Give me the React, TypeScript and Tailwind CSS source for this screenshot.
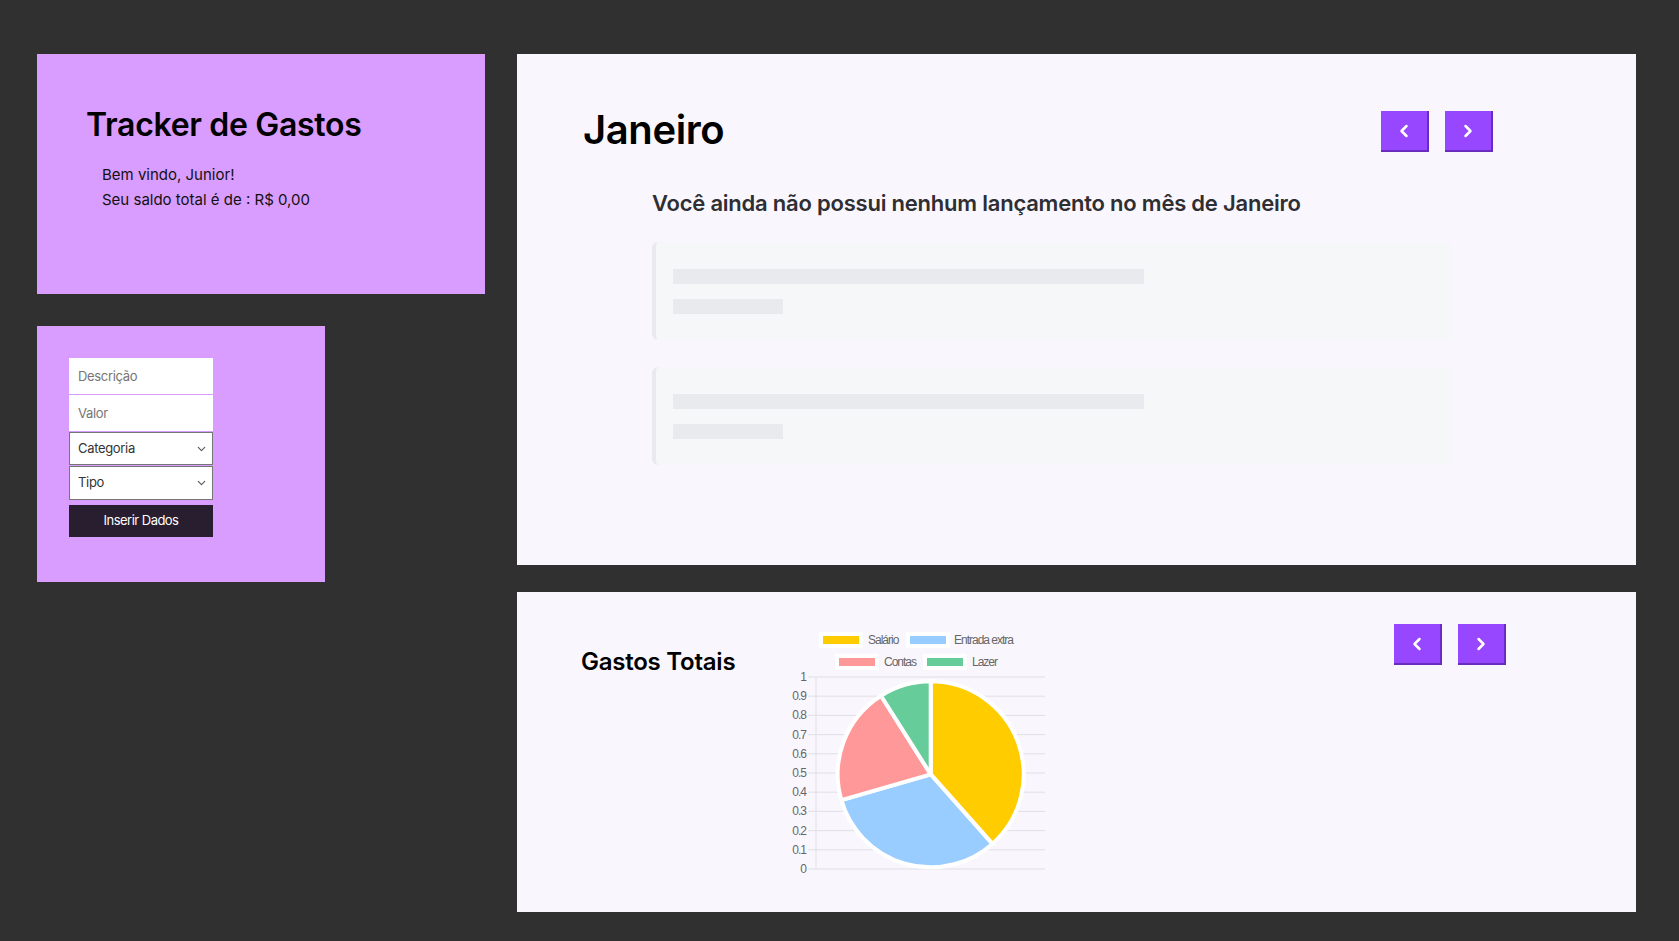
import React from "react";
import { ChevronLeft, ChevronRight, ChevronDown } from "lucide-react";

const slices = [
  { label: "Salário", color: "#ffcc00", value: 3000 },
  { label: "Entrada extra", color: "#99ccff", value: 2500 },
  { label: "Contas", color: "#ff9999", value: 1600 },
  { label: "Lazer", color: "#66cc99", value: 700 },
];

function NavButtons() {
  return (
    <div className="flex gap-4">
      <button className="flex h-[41px] w-[48px] items-center justify-center border-r-2 border-b-2 border-[#6a2cbc] bg-[#9747ff] text-white">
        <ChevronLeft size={20} strokeWidth={3} />
      </button>
      <button className="flex h-[41px] w-[48px] items-center justify-center border-r-2 border-b-2 border-[#6a2cbc] bg-[#9747ff] text-white">
        <ChevronRight size={20} strokeWidth={3} />
      </button>
    </div>
  );
}

function Select({ label, h }: { label: string; h: string }) {
  return (
    <div className={`relative mt-px w-full ${h}`}>
      <select className="h-full w-full appearance-none border border-[#767676] bg-white px-[8px] text-[#333]">
        <option>{label}</option>
      </select>
      <ChevronDown size={13} strokeWidth={2} className="pointer-events-none absolute top-1/2 right-[5px] -translate-y-1/2 text-[#555]" />
    </div>
  );
}

function Skeleton() {
  return (
    <div className="flex h-[98px] w-[800px] flex-col gap-[15px] rounded-l-md border-l-4 border-[#e9eaee] bg-[#f6f7f9] pt-[27px] pl-[17px]">
      <div className="h-[15px] w-[471px] bg-[#e8eaed]" />
      <div className="h-[15px] w-[110px] bg-[#e8eaed]" />
    </div>
  );
}

function PieChart() {
  const cx = 150.7;
  const cy = 149.3;
  const r = 93;
  const total = slices.reduce((s, x) => s + x.value, 0);
  let start = 0;
  const pt = (a: number) => [cx + r * Math.sin(a), cy - r * Math.cos(a)];
  const ticks = Array.from({ length: 11 }, (_, i) => i);

  return (
    <svg width={270} height={250} className="shrink-0" style={{ fontFamily: "'Liberation Sans', Arial, sans-serif" }}>
      {/* legend */}
      <g fontSize={12} fill="#666" letterSpacing={-1}>
        <rect x={41} y={9} width={40} height={12} fill="#ffcc00" stroke="#fff" strokeWidth={4} />
        <text x={88} y={19}>Salário</text>
        <rect x={128} y={9} width={40} height={12} fill="#99ccff" stroke="#fff" strokeWidth={4} />
        <text x={174} y={19}>Entrada extra</text>
        <rect x={57} y={31} width={40} height={12} fill="#ff9999" stroke="#fff" strokeWidth={4} />
        <text x={104} y={41}>Contas</text>
        <rect x={145} y={31} width={40} height={12} fill="#66cc99" stroke="#fff" strokeWidth={4} />
        <text x={192} y={41}>Lazer</text>
      </g>

      {/* grid */}
      {ticks.map((i) => {
        const y = 52 + i * 19.2;
        const v = (10 - i) / 10;
        return (
          <g key={i}>
            <line x1={28} x2={265} y1={y} y2={y} stroke="#e1dfe6" strokeWidth={1} />
            <text x={26} y={y + 4} fontSize={12} fill="#666" textAnchor="end" letterSpacing={-1}>
              {v === 0 ? "0" : v === 1 ? "1" : v.toFixed(1)}
            </text>
          </g>
        );
      })}
      <line x1={36} x2={36} y1={52} y2={244} stroke="#e1dfe6" strokeWidth={1} />

      {/* slices */}
      {slices.map((s) => {
        const a0 = start;
        const a1 = start + (s.value / total) * Math.PI * 2;
        start = a1;
        const [x0, y0] = pt(a0);
        const [x1, y1] = pt(a1);
        const large = a1 - a0 > Math.PI ? 1 : 0;
        return (
          <path
            key={s.label}
            d={`M${cx} ${cy} L${x0} ${y0} A${r} ${r} 0 ${large} 1 ${x1} ${y1} Z`}
            fill={s.color}
            stroke="#fff"
            strokeWidth={4}
            strokeLinejoin="round"
          />
        );
      })}
    </svg>
  );
}

export default function App() {
  return (
    <div className="flex min-h-screen items-start gap-8 bg-[#303030] pt-[54px] pl-[37px] font-[Inter,sans-serif]">
      <div className="flex w-[448px] flex-col gap-8">
        <div className="h-[240px] w-[448px] bg-[#d99cff] pt-[55px] pl-[49px]">
          <h1 className="text-[32px] leading-[32px] font-semibold tracking-[-0.01em] text-black">Tracker de Gastos</h1>
          <div className="mt-[21px] ml-4 text-[15px] leading-[25px] text-[#111]">
            <p>Bem vindo, Junior!</p>
            <p>Seu saldo total é de : R$ 0,00</p>
          </div>
        </div>

        <div className="h-[256px] w-[288px] bg-[#d99cff] pt-8 pl-8">
          <div className="flex w-[144px] flex-col text-[13px] tracking-tight">
            <input className="h-[36px] w-full bg-white px-[9px] placeholder:text-[#757575]" placeholder="Descrição" />
            <input className="mt-px h-[36px] w-full bg-white px-[9px] placeholder:text-[#757575]" placeholder="Valor" />
            <Select label="Categoria" h="h-[33px]" />
            <Select label="Tipo" h="h-[34px]" />
            <button className="mt-[5px] h-[32px] w-full bg-[#291e30] text-[13px] tracking-[-0.04em] text-white">
              Inserir Dados
            </button>
          </div>
        </div>
      </div>

      <div className="flex w-[1119px] flex-col gap-[27px]">
        <div className="h-[511px] bg-[#f9f7fd] pt-[57px] pl-[66px]">
          <div className="flex items-start justify-between pr-[143px]">
            <h2 className="text-[40px] leading-[37px] font-semibold tracking-[-0.01em] text-black">Janeiro</h2>
            <NavButtons />
          </div>
          <p className="mt-[36px] ml-[69px] text-[22px] leading-[30px] font-semibold tracking-[-0.01em] text-[#2e2e33]">
            Você ainda não possui nenhum lançamento no mês de Janeiro
          </p>
          <div className="mt-[24px] ml-[69px] flex flex-col gap-[27px]">
            <Skeleton />
            <Skeleton />
          </div>
        </div>

        <div className="flex h-[320px] items-start bg-[#f9f7fd] pt-8 pl-16">
          <h2 className="mt-[22px] w-[152px] shrink-0 text-[24px] leading-[32px] font-semibold tracking-[-0.01em] whitespace-nowrap text-black">
            Gastos Totais
          </h2>
          <div className="mt-px ml-[47px]">
            <PieChart />
          </div>
          <div className="mr-[130px] ml-auto">
            <NavButtons />
          </div>
        </div>
      </div>
    </div>
  );
}
